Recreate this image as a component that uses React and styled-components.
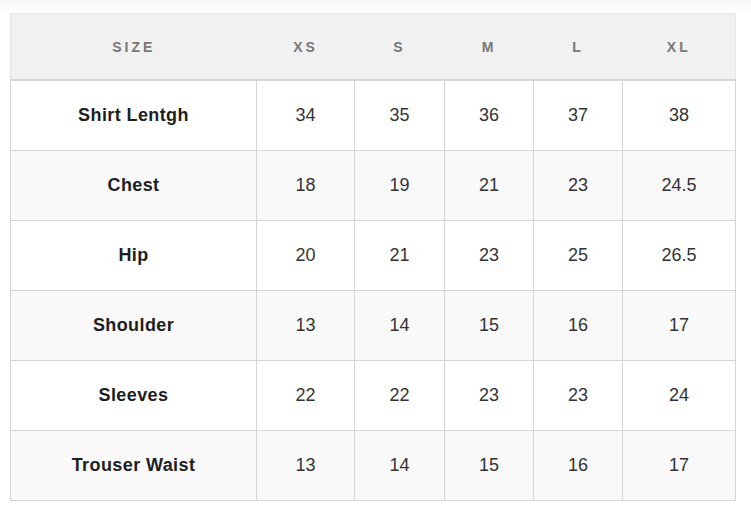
import React from "react";
import styled, { createGlobalStyle } from "styled-components";

const GlobalStyle = createGlobalStyle`
    body {
        margin: 0;
        background: #ffffff;
        font-family: "Liberation Sans", Arial, sans-serif;
    }
`;

const Page = styled.div`
    padding: 13px 0 0 10px;
    background: linear-gradient(#f7f7f7, #ffffff 13px);
`;

const Table = styled.table`
    border-collapse: collapse;
    table-layout: fixed;
    width: 725px;
`;

const HeadCell = styled.th`
    height: 65px;
    padding: 0;
    background: #f1f1f1;
    color: #777777;
    font-size: 14px;
    font-weight: 700;
    letter-spacing: 3px;
    text-transform: uppercase;
    text-align: center;
    border-top: 1px solid #e6e6e6;
    border-bottom: 2px solid #d6d6d6;
    &:first-child {
        border-left: 1px solid #e6e6e6;
    }
    &:last-child {
        border-right: 1px solid #e6e6e6;
    }
`;

const Row = styled.tr`
    background: ${(p) => (p.$alt ? "#f8f9f8" : "#ffffff")};
`;

const Cell = styled.td`
    height: 69px;
    padding: 0;
    text-align: center;
    font-size: 18px;
    letter-spacing: ${(p) => (p.$label ? "0.4px" : "0")};
    color: ${(p) => (p.$label ? "#1e1e1e" : "#333333")};
    font-weight: ${(p) => (p.$label ? 700 : 400)};
    border: 1px solid #d4d4d4;
`;

const COLUMNS = [
    { key: "size", width: 246 },
    { key: "XS", width: 98 },
    { key: "S", width: 90 },
    { key: "M", width: 89 },
    { key: "L", width: 89 },
    { key: "XL", width: 113 },
];

const ROWS = [
    ["Shirt Lentgh", "34", "35", "36", "37", "38"],
    ["Chest", "18", "19", "21", "23", "24.5"],
    ["Hip", "20", "21", "23", "25", "26.5"],
    ["Shoulder", "13", "14", "15", "16", "17"],
    ["Sleeves", "22", "22", "23", "23", "24"],
    ["Trouser Waist", "13", "14", "15", "16", "17"],
];

const App = () => {
    return (
        <Page>
            <GlobalStyle />
            <Table>
                <colgroup>
                    {COLUMNS.map((c) => (
                        <col key={c.key} style={{ width: c.width }} />
                    ))}
                </colgroup>
                <thead>
                    <tr>
                        {COLUMNS.map((c) => (
                            <HeadCell key={c.key}>{c.key}</HeadCell>
                        ))}
                    </tr>
                </thead>
                <tbody>
                    {ROWS.map((row, i) => (
                        <Row key={row[0]} $alt={i % 2 === 1}>
                            {row.map((value, j) => (
                                <Cell key={j} $label={j === 0}>
                                    {value}
                                </Cell>
                            ))}
                        </Row>
                    ))}
                </tbody>
            </Table>
        </Page>
    );
};

export default App;
